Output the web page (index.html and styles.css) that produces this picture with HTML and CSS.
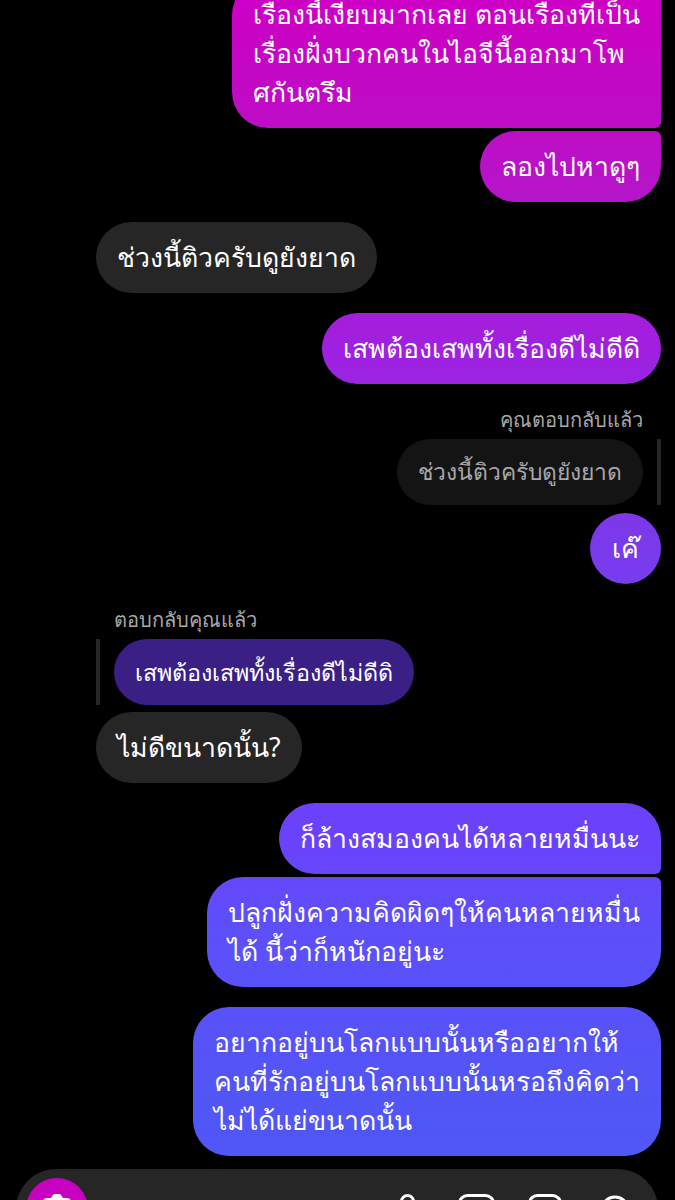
FILE: index.html
```html
<!DOCTYPE html>
<html lang="th">
<head>
    <meta charset="UTF-8">
    <meta name="viewport" content="width=device-width, initial-scale=1.0">
    <title>Chat</title>
    <link rel="stylesheet" href="styles.css">
</head>
<body>
    <div class="chat">
      <div class="row mine"><div class="bubble sent first">เรื่องนี้เงียบมากเลย ตอนเรื่องที่เป็น<br>เรื่องฝั่งบวกคนในไอจีนี้ออกมาโพ<br>ศกันตรึม</div></div>
      <div class="row mine gap-3"><div class="bubble sent last">ลองไปหาดูๆ</div></div>

      <div class="row theirs gap-20"><div class="bubble received">ช่วงนี้ติวครับดูยังยาด</div></div>

      <div class="row mine gap-20"><div class="bubble sent">เสพต้องเสพทั้งเรื่องดีไม่ดีดิ</div></div>

      <div class="reply-label mine-label">คุณตอบกลับแล้ว</div>
      <div class="row mine reply-row">
        <div class="bubble quoted-dim">ช่วงนี้ติวครับดูยังยาด</div>
        <div class="reply-bar"></div>
      </div>
      <div class="row mine gap-8"><div class="bubble sent round">เค๊</div></div>

      <div class="reply-label their-label">ตอบกลับคุณแล้ว</div>
      <div class="row theirs reply-row">
        <div class="reply-bar"></div>
        <div class="bubble quoted-purple">เสพต้องเสพทั้งเรื่องดีไม่ดีดิ</div>
      </div>
      <div class="row theirs gap-7"><div class="bubble received">ไม่ดีขนาดนั้น?</div></div>

      <div class="row mine gap-20"><div class="bubble sent top">ก็ล้างสมองคนได้หลายหมื่นนะ</div></div>
      <div class="row mine gap-3"><div class="bubble sent bottom">ปลูกฝั่งความคิดผิดๆให้คนหลายหมื่น<br>ได้ นี้ว่าก็หนักอยู่นะ</div></div>
      <div class="row mine gap-20"><div class="bubble sent">อยากอยู่บนโลกแบบนั้นหรืออยากให้<br>คนที่รักอยู่บนโลกแบบนั้นหรอถึงคิดว่า<br>ไม่ได้แย่ขนาดนั้น</div></div>
    </div>

    <div class="composer">
      <div class="camera">
        <svg width="30" height="26" viewBox="0 0 30 26"><path d="M9 4 L11 1 Q11.500 0 13 0 H17 Q18.500 0 19 1 L21 4 H25 Q29 4 29 8 V22 Q29 26 25 26 H5 Q1 26 1 22 V8 Q1 4 5 4 Z" fill="#fff"/></svg>
      </div>
      <div class="tools">
        <svg class="mic" width="15" height="32" viewBox="0 0 15 32"><rect x="1.500" y="1.500" width="12" height="22" rx="6" fill="none" stroke="#fff" stroke-width="3"/></svg>
        <svg class="photo" width="37" height="36" viewBox="0 0 37 36"><rect x="1.500" y="1.500" width="34" height="33" rx="8" fill="none" stroke="#fff" stroke-width="3"/></svg>
        <svg class="sticker" width="34" height="36" viewBox="0 0 34 36"><rect x="1.500" y="1.500" width="31" height="33" rx="8" fill="none" stroke="#fff" stroke-width="3"/></svg>
        <svg class="plus" width="30" height="36" viewBox="0 0 30 36"><circle cx="15" cy="16.500" r="13.500" fill="none" stroke="#fff" stroke-width="3"/></svg>
      </div>
    </div>
</body>
</html>
```

FILE: styles.css
```css
body {
  margin: 0;
  height: 100vh;
  background: #000;
  color: #fff;
  font-family: "Noto Sans", "Liberation Sans", "DejaVu Sans", sans-serif;
  overflow: hidden;
}
.chat {
  display: flex;
  flex-direction: column;
  margin-top: -21px;
  padding: 0 14px 0 96px;
}
.row {
  display: flex;
}
.mine {
  justify-content: flex-end;
}
.theirs {
  justify-content: flex-start;
}
.gap-3 { margin-top: 3px; }
.gap-7 { margin-top: 7px; }
.gap-8 { margin-top: 8px; }
.gap-20 { margin-top: 20px; }
.bubble {
  padding: 16px 21px;
  border-radius: 36px;
  font-size: 26.600px;
  line-height: 39px;
  white-space: nowrap;
}
.sent {
  background: linear-gradient(180deg, #cc00c4 0, #b515c8 200px, #a020e0 350px, #7a3aeb 540px, #6a42fb 840px, #5d4ffa 930px, #4f57f5 1150px) fixed;
}
.first {
  border-top-right-radius: 6px;
  border-bottom-right-radius: 6px;
}
.last {
  border-top-right-radius: 6px;
}
.top {
  border-bottom-right-radius: 6px;
}
.bottom {
  border-top-right-radius: 6px;
}
.round {
  width: 71px;
  padding: 16px 0;
  box-sizing: border-box;
  text-align: center;
}
.received {
  background: #262626;
}
.reply-label {
  margin-top: 22px;
  font-size: 20px;
  line-height: 28px;
  color: #a8a8a8;
}
.mine-label {
  text-align: right;
  padding-right: 18px;
}
.their-label {
  padding-left: 18px;
}
.reply-row {
  margin-top: 5px;
  gap: 14px;
}
.reply-bar {
  width: 4px;
  background: #262626;
}
.quoted-dim,
.quoted-purple {
  padding: 15px 21px;
  line-height: 36px;
}
.quoted-dim {
  font-size: 22.800px;
  background: #141414;
  color: #a8a8a8;
}
.quoted-purple {
  font-size: 23.300px;
  background: #3a1f85;
}
.composer {
  display: flex;
  justify-content: space-between;
  height: 80px;
  margin: 13px 17px 0 16px;
  padding: 9px 28px 0 10px;
  box-sizing: border-box;
  background: #262626;
  border-radius: 40px;
}
.camera {
  display: flex;
  justify-content: center;
  width: 62px;
  height: 62px;
  padding-top: 16px;
  box-sizing: border-box;
  border-radius: 50%;
  background: #c800c0;
}
.tools {
  display: flex;
  padding-top: 16px;
}
.photo {
  margin-left: 43px;
}
.sticker {
  margin-left: 33px;
}
.plus {
  margin-left: 38px;
}
```
